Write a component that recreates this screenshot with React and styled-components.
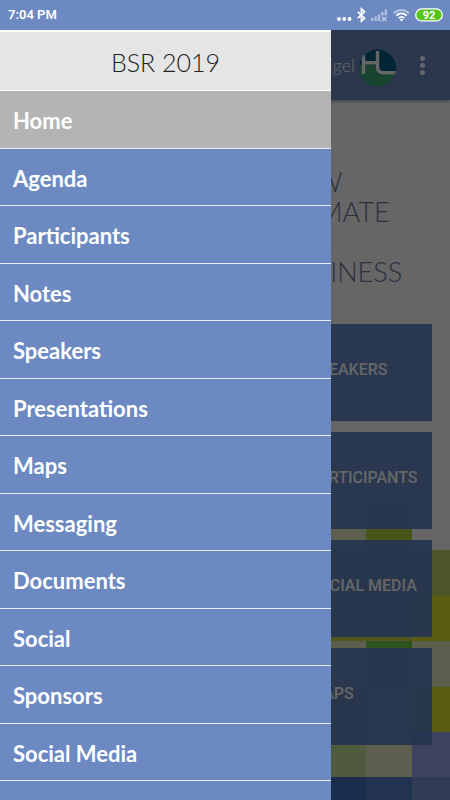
import React from "react";
import styled, { createGlobalStyle } from "styled-components";

const colors = {
  blue: "#6c8ac1",
  tile: "rgba(97, 134, 198, 0.96)",
  heading: "#6a7a9c",
  white: "#ffffff",
};

const GlobalStyle = createGlobalStyle`
  * {
    box-sizing: border-box;
  }

  body {
    margin: 0;
    font-family: Lato, sans-serif;
  }
`;

const Phone = styled.div`
  display: flex;
  flex-direction: column;
  height: 100vh;
  overflow: hidden;
  background: ${colors.white};
`;

const StatusBar = styled.header`
  display: flex;
  flex: none;
  align-items: center;
  justify-content: space-between;
  height: 30px;
  padding: 0 7px 0 8px;
  background: ${colors.blue};
  color: ${colors.white};
`;

const Clock = styled.time`
  font-family: Roboto, sans-serif;
  font-size: 13px;
  font-weight: 600;
  line-height: 16px;
`;

const StatusIcons = styled.div`
  display: flex;
  align-items: center;
  gap: 5px;

  svg {
    display: block;
  }
`;

const Screen = styled.div`
  position: relative;
  flex: 1;
  min-height: 0;
  overflow: hidden;
`;

const Page = styled.div`
  display: flex;
  flex-direction: column;
  height: 100%;
`;

const AppBar = styled.div`
  display: flex;
  flex: none;
  align-items: center;
  justify-content: flex-end;
  height: 70px;
  padding-right: 19px;
  background: ${colors.blue};
  color: ${colors.white};
  box-shadow: 0 1px 3px rgba(0, 0, 0, 0.4);
`;

const UserName = styled.span`
  font-size: 18px;
  font-weight: 300;
  line-height: 24px;
  margin-right: 4px;
`;

const Avatar = styled.svg`
  width: 37px;
  height: 38px;
  margin-top: 6px;
`;

const MoreButton = styled.button`
  display: flex;
  flex-direction: column;
  align-items: center;
  gap: 2px;
  width: 18px;
  margin-left: 17px;
  padding: 0;
  border: 0;
  background: none;

  span {
    width: 5px;
    height: 5px;
    border-radius: 50%;
    background: ${colors.white};
  }
`;

const Content = styled.main`
  display: grid;
  flex: 1;
  min-height: 0;

  > * {
    grid-area: 1 / 1;
  }
`;

const Mosaic = styled.div`
  display: grid;
  align-self: end;
  justify-self: end;
  grid-template-columns: 46px 46px 38px;
  grid-template-rows: 45px 46px 45px 46px 45px 45px 23px;
`;

const Cell = styled.div`
  background: ${(props) => props.$color};
`;

const Home = styled.div`
  display: grid;
  align-content: start;
  grid-template-columns: 1fr 1fr;
  column-gap: 10px;
  padding: 67px 18px 0;
`;

const Theme = styled.h1`
  grid-column: 2;
  margin: 0 0 37px;
  padding-left: 49px;
  color: ${colors.heading};
  font-size: 27px;
  font-weight: 300;
  line-height: 30px;
`;

const Tiles = styled.div`
  display: grid;
  grid-column: 2;
  gap: 11px;
`;

const Tile = styled.button`
  height: 97px;
  padding: 0 0 6px 79px;
  border: 0;
  background: ${colors.tile};
  color: ${colors.white};
  font-family: Roboto, sans-serif;
  font-size: 16px;
  font-weight: 500;
  line-height: 20px;
  text-align: left;
  white-space: nowrap;
`;

const Scrim = styled.div`
  position: absolute;
  inset: 0;
  background: rgba(0, 0, 0, 0.6);
`;

const Drawer = styled.nav`
  position: absolute;
  top: 0;
  bottom: 0;
  left: 0;
  width: 331px;
  max-width: 80%;
  overflow: hidden;
  background: ${colors.blue};
`;

const DrawerTitle = styled.h2`
  height: 61px;
  margin: 0;
  border-top: 2px solid ${colors.white};
  border-bottom: 1px solid ${colors.white};
  background: #e5e5e5;
  color: #222222;
  font-size: 25px;
  font-weight: 300;
  line-height: 60px;
  text-align: center;
`;

const Menu = styled.ul`
  margin: 0;
  padding: 0;
  list-style: none;
`;

const MenuItem = styled.li`
  height: 57px;
  border-bottom: 1px solid #e4eaf4;
  background: ${(props) => (props.$active ? "#b4b4b4" : "transparent")};

  &:nth-child(odd) {
    height: 58px;
  }
`;

const MenuLink = styled.a`
  display: block;
  padding: 2px 0 0 13px;
  color: ${colors.white};
  font-size: 22px;
  font-weight: 700;
  line-height: 56px;
  text-decoration: none;
`;

const menu = [
  "Home",
  "Agenda",
  "Participants",
  "Notes",
  "Speakers",
  "Presentations",
  "Maps",
  "Messaging",
  "Documents",
  "Social",
  "Sponsors",
  "Social Media",
];

const tiles = ["SPEAKERS", "PARTICIPANTS", "SOCIAL MEDIA", "MAPS"];

const mosaic = [
  "#e6eec3", "#b2d437", "#ffffff",
  "#c8e19e", "#b2d437", "#bed764",
  "#d0d74e", "#d0d74e", "#e6e62d",
  "#e6eec3", "#76d04e", "#e6eec3",
  "#c8e19e", "#e6eec3", "#e6e62d",
  "#c8e19e", "#e6eec3", "#9ba5f0",
  "#4471be", "#5380c6", "#7b94d2",
];

const Dots = () => (
  <svg width="15" height="16" viewBox="0 0 15 16" fill="#fff">
    <circle cx="2" cy="12" r="1.9" />
    <circle cx="7.3" cy="12" r="1.9" />
    <circle cx="12.6" cy="12" r="1.9" />
  </svg>
);

const Bluetooth = () => (
  <svg width="9" height="16" viewBox="0 0 9 16" fill="none" stroke="#fff" strokeWidth="1.6">
    <path d="M.8 4.8 7.6 11.2 4.4 14.2V1.8L7.6 4.8.8 11.2" />
  </svg>
);

const Signal = () => (
  <svg width="17" height="16" viewBox="0 0 17 16" fill="#fff" fillOpacity=".45">
    <path d="M0 11h2.4v3H0zM3.4 9.5h2.4V14H3.4zM6.8 7.5h2.4V14H6.8zM10.2 5h2.4v3.5h-2.4zM13.6 2.5H16v6h-2.4z" />
    <path d="m11 10 4.5 4M15.5 10 11 14" stroke="#fff" strokeOpacity=".6" strokeWidth="1.3" />
  </svg>
);

const Wifi = () => (
  <svg width="17" height="16" viewBox="0 0 17 16" fill="none" stroke="#fff" strokeWidth="1.9">
    <path d="M1 6.3C5.3 1.9 11.7 1.9 16 6.3" strokeOpacity=".5" />
    <path d="M3.4 8.7c3-2.9 7.2-2.9 10.2 0" />
    <path d="M5.7 11.1c1.7-1.5 3.9-1.5 5.6 0" />
    <path d="M8.5 14.5 6.7 12.4q1.8-1.3 3.6 0z" fill="#fff" stroke="none" />
  </svg>
);

const Battery = () => (
  <svg width="28" height="16" viewBox="0 0 28 16">
    <rect x=".7" y="1.9" width="26.6" height="12" rx="6" fill="#55c516" stroke="#fff" strokeWidth="1.3" />
    <text x="14" y="11.8" fill="#fff" fontFamily="Roboto, sans-serif" fontSize="11" fontWeight="700" textAnchor="middle">
      92
    </text>
  </svg>
);

const Logo = () => (
  <Avatar viewBox="0 0 37 38" aria-hidden="true">
    <clipPath id="disc">
      <circle cx="18.5" cy="19" r="18.5" />
    </clipPath>
    <g clipPath="url(#disc)">
      <path d="M0 0h37v38H0z" fill="#006088" />
      <path d="M0 16H18V25H37V38H0z" fill="#3caa78" />
      <path
        d="M4.5 6V25M4.5 13.8H18.5M18.5 2V18Q18.5 23.8 24 23.8H37"
        fill="none"
        stroke="#fff"
        strokeWidth="3.4"
      />
    </g>
  </Avatar>
);

const App = () => (
  <>
    <GlobalStyle />
    <Phone>
      <StatusBar>
        <Clock>7:04 PM</Clock>
        <StatusIcons>
          <Dots />
          <Bluetooth />
          <Signal />
          <Wifi />
          <Battery />
        </StatusIcons>
      </StatusBar>
      <Screen>
        <Page>
          <AppBar>
            <UserName>Nigel</UserName>
            <Logo />
            <MoreButton aria-label="More options">
              <span />
              <span />
              <span />
            </MoreButton>
          </AppBar>
          <Content>
            <Mosaic>
              {mosaic.map((color, i) => (
                <Cell key={i} $color={color} />
              ))}
            </Mosaic>
            <Home>
              <Theme>
                NEW
                <br />
                CLIMATE
                <br />
                FOR
                <br />
                BUSINESS
              </Theme>
              <Tiles>
                {tiles.map((label) => (
                  <Tile key={label}>{label}</Tile>
                ))}
              </Tiles>
            </Home>
          </Content>
        </Page>
        <Scrim />
        <Drawer>
          <DrawerTitle>BSR 2019</DrawerTitle>
          <Menu>
            {menu.map((label, i) => (
              <MenuItem key={label} $active={i === 0}>
                <MenuLink href="#">{label}</MenuLink>
              </MenuItem>
            ))}
          </Menu>
        </Drawer>
      </Screen>
    </Phone>
  </>
);

export default App;
